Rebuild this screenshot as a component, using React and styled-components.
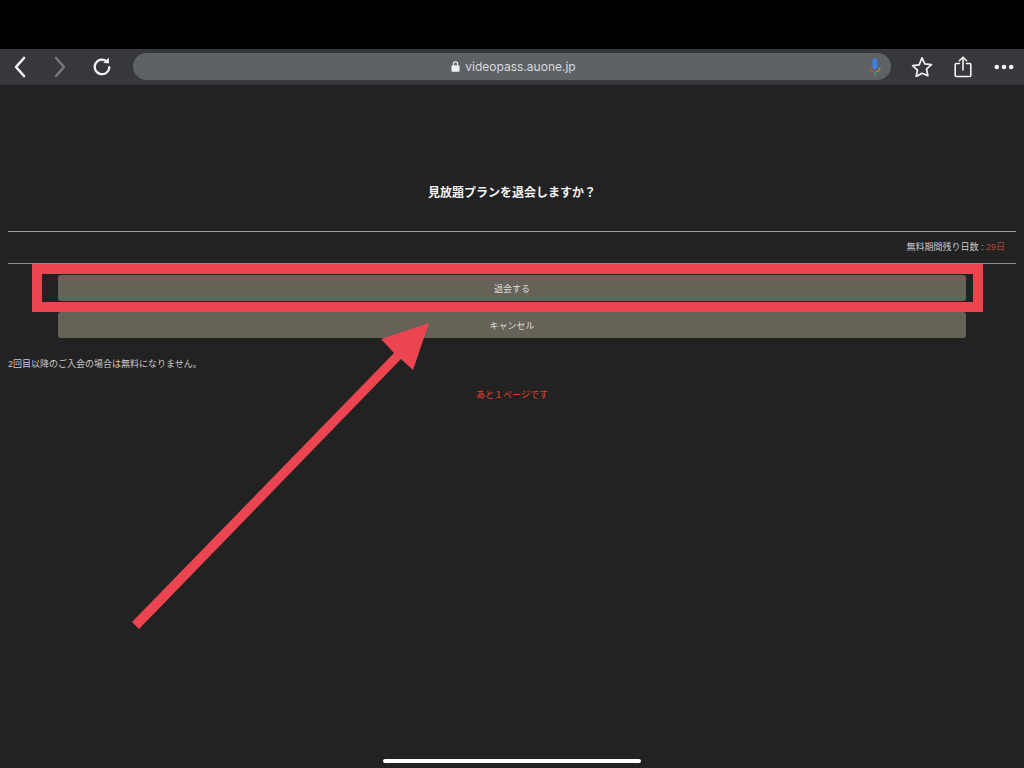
import styled, { createGlobalStyle } from 'styled-components'

const GlobalStyle = createGlobalStyle`
  html, body {
    background: #222222;
    margin: 0;
    padding: 0;
  }
  body {
    font-family: "Liberation Sans", "Noto Sans CJK JP", sans-serif;
  }
`

const Screen = styled.div`
  background: #222222;
  display: flex;
  flex-direction: column;
  height: 768px;
  overflow: hidden;
  position: relative;
  width: 1024px;
`

const StatusBar = styled.div`
  background: #000;
  height: 49px;
`

const Toolbar = styled.div`
  align-items: center;
  background: #36383b;
  border-bottom: 1px solid #2c2d2f;
  box-sizing: border-box;
  display: flex;
  height: 36px;
`

const NavButton = styled.div`
  align-items: center;
  display: flex;
  flex: none;
  height: 100%;
  justify-content: center;
  margin-left: ${({ $left }) => $left}px;
  width: ${({ $width }) => $width}px;
`

const AddressBar = styled.div`
  align-items: center;
  background: #5f6265;
  border-radius: 14px;
  box-sizing: border-box;
  color: #d8d9da;
  display: flex;
  flex: none;
  font-family: "Inter", "Liberation Sans", sans-serif;
  font-size: 12px;
  gap: 5px;
  height: 27px;
  justify-content: center;
  margin-left: 17px;
  padding-left: 3px;
  position: relative;
  width: 758px;
`

const MicIcon = styled.svg`
  position: absolute;
  right: 9px;
  top: 5px;
`

const Page = styled.main`
  display: flex;
  flex-direction: column;
  padding: 0 8px;
`

const Title = styled.h1`
  color: #f2f2f2;
  font-size: 12px;
  font-weight: 700;
  line-height: 18px;
  margin: 0;
  padding: 99px 0 29px;
  text-align: center;
`

const InfoRow = styled.div`
  border-bottom: 1px solid #8e8e8e;
  border-top: 1px solid #a0a0a0;
  box-sizing: border-box;
  color: #c9c9c9;
  font-size: 9px;
  height: 33px;
  line-height: 30px;
  padding-right: 11px;
  text-align: right;
`

const Days = styled.span`
  color: #b5492f;
`

const Actions = styled.div`
  display: flex;
  flex-direction: column;
  gap: 11px;
  padding: 11px 50px 0;
`

const ActionButton = styled.button`
  background: #666258;
  border: 0;
  border-radius: 3px;
  color: #dededa;
  font-family: inherit;
  font-size: 9px;
  height: 26px;
  padding: 0;
`

const Notice = styled.p`
  color: #c9c9c9;
  font-size: 9px;
  line-height: 14px;
  margin: 0;
  padding-top: 19px;
`

const Remaining = styled.p`
  color: #d63a2a;
  font-size: 9px;
  font-weight: 500;
  line-height: 14px;
  margin: 0;
  padding-top: 17px;
  text-align: center;
`

const HomeIndicator = styled.div`
  background: #fff;
  border-radius: 2px;
  bottom: 5px;
  height: 4px;
  left: 383px;
  position: absolute;
  width: 258px;
`

const Highlight = styled.div`
  border: 10px solid #ea4550;
  box-sizing: border-box;
  height: 48px;
  left: 32px;
  position: absolute;
  top: 264px;
  width: 951px;
`

const Arrow = styled.svg`
  left: 0;
  position: absolute;
  top: 0;
`

export default function App() {
  return (
    <Screen>
      <GlobalStyle />
      <StatusBar />
      <Toolbar>
        <NavButton $left={6} $width={28}>
          <svg width="14" height="22" viewBox="0 0 14 22" fill="none" stroke="#f2f2f2" strokeWidth="2.6" strokeLinecap="round" strokeLinejoin="round">
            <path d="M11 2 3 11l8 9" />
          </svg>
        </NavButton>
        <NavButton $left={12} $width={28}>
          <svg width="14" height="22" viewBox="0 0 14 22" fill="none" stroke="#77797c" strokeWidth="2.6" strokeLinecap="round" strokeLinejoin="round">
            <path d="m3 2 8 9-8 9" />
          </svg>
        </NavButton>
        <NavButton $left={14} $width={28}>
          <svg width="20" height="20" viewBox="0 0 20 20" fill="none" stroke="#f2f2f2" strokeWidth="2.2" strokeLinecap="round" strokeLinejoin="round">
            <path d="M15.6 5.2A7.3 7.3 0 1 0 17.3 10" />
            <path d="m11.2 6 5.8.2-.2-5.4z" fill="#f2f2f2" stroke="none" />
          </svg>
        </NavButton>
        <AddressBar>
          <svg width="9" height="11" viewBox="0 0 9 11">
            <path d="M2.4 4.5V3a2.1 2.1 0 0 1 4.2 0v1.5" fill="none" stroke="#f0f0f0" strokeWidth="1.1" />
            <rect x="0.5" y="4.3" width="8" height="6.4" rx="1" fill="#f0f0f0" />
          </svg>
          videopass.auone.jp
          <MicIcon width="14" height="18" viewBox="0 0 14 18" fill="none">
            <rect x="4.5" y="0.5" width="5" height="11" rx="2.5" fill="#3f7fe0" />
            <path d="M2 9.5c.2 2.6 2 4 3.8 4.3" stroke="#c9503f" strokeWidth="1.2" />
            <path d="M12 9.5c-.2 2.6-2 4-3.8 4.3" stroke="#c98a3f" strokeWidth="1.2" />
            <path d="M7 14v3.5" stroke="#4a9d5b" strokeWidth="1.2" />
          </MicIcon>
        </AddressBar>
        <NavButton $left={17} $width={28}>
          <svg width="22" height="21" viewBox="0 0 22 21" fill="none" stroke="#f2f2f2" strokeWidth="1.7" strokeLinejoin="round">
            <path d="m11 1.8 2.8 6.1 6.6.7-4.9 4.5 1.4 6.5L11 17.3l-5.9 3.3 1.4-6.5-4.9-4.5 6.6-.7z" />
          </svg>
        </NavButton>
        <NavButton $left={13} $width={28}>
          <svg width="18" height="22" viewBox="0 0 18 22" fill="none" stroke="#f2f2f2" strokeWidth="1.6" strokeLinecap="round" strokeLinejoin="round">
            <path d="M5.5 7.5H2.2a1 1 0 0 0-1 1v11a1 1 0 0 0 1 1h13.6a1 1 0 0 0 1-1v-11a1 1 0 0 0-1-1h-3.3" />
            <path d="M9 14V1.5M5.4 4.8 9 1.2l3.6 3.6" />
          </svg>
        </NavButton>
        <NavButton $left={13} $width={28}>
          <svg width="20" height="6" viewBox="0 0 20 6" fill="#f2f2f2">
            <circle cx="2.8" cy="3" r="2.3" />
            <circle cx="10" cy="3" r="2.3" />
            <circle cx="17.2" cy="3" r="2.3" />
          </svg>
        </NavButton>
      </Toolbar>
      <Page>
        <Title>見放題プランを退会しますか？</Title>
        <InfoRow>
          無料期間残り日数 : <Days>29日</Days>
        </InfoRow>
        <Actions>
          <ActionButton>退会する</ActionButton>
          <ActionButton>キャンセル</ActionButton>
        </Actions>
        <Notice>2回目以降のご入会の場合は無料になりません。</Notice>
        <Remaining>あと１ページです</Remaining>
      </Page>
      <Highlight />
      <Arrow width="1024" height="768" viewBox="0 0 1024 768">
        <path d="M132 622 394 353 381 339 429 323 413 370 401 359 139 629z" fill="#ea4550" />
      </Arrow>
      <HomeIndicator />
    </Screen>
  )
}
